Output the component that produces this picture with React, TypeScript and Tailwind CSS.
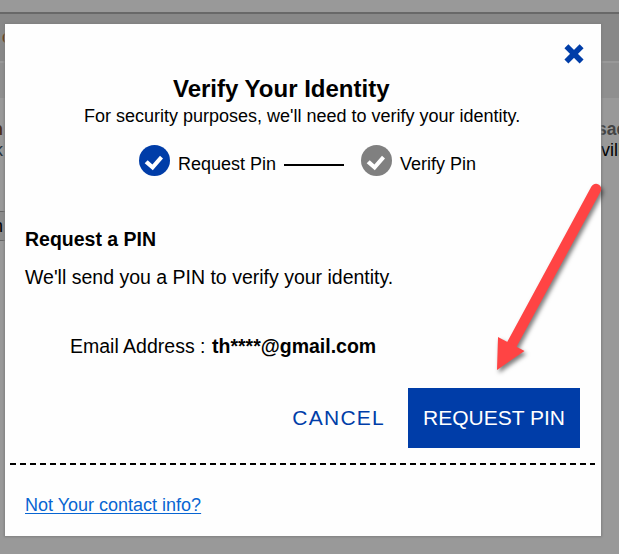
import type { ReactNode } from "react";

function StepIcon({ color }: { color: string }) {
  return (
    <svg className="block h-[31px] w-[31px] shrink-0" viewBox="0 0 31 31">
      <circle cx="15.5" cy="15.5" r="15.5" fill={color} />
      <path d="M5.7 18.3 L8.7 15.3 L13.4 19.4 L21 10.8 L24 13.6 L13.8 25.3 Z" fill="#fff" />
    </svg>
  );
}

function Line({ className, children }: { className: string; children: ReactNode }) {
  return <div className={`flex items-center whitespace-nowrap ${className}`}>{children}</div>;
}

function Backdrop() {
  return (
    <div className="flex h-full flex-col bg-[#999] text-[18px] leading-[21px]">
      <div className="h-3 shrink-0" />
      <div className="h-0.5 shrink-0 bg-[#686868]" />
      <div className="h-[47px] shrink-0 overflow-hidden bg-[#888] pt-[13px]">
        <span className="ml-[2px] text-[#5a2500]">c</span>
      </div>
      <div className="h-0.5 shrink-0 bg-[#999]" />
      <div className="h-[35px] shrink-0 bg-[#8f8f8f]" />
      <div className="flex h-[113px] shrink-0 justify-between overflow-hidden pt-[21px]">
        <div className="-ml-2">
          <div className="font-bold text-[#503018]">n</div>
          <div className="ml-[2px] text-[#26333d]">k</div>
        </div>
        <div className="w-[20px] shrink-0 whitespace-nowrap">
          <div className="-ml-[2px] text-[17.5px] font-bold text-[#444]">sac</div>
          <div className="ml-[2px] text-black">vill</div>
        </div>
      </div>
      <div className="flex h-[30px] w-8 shrink-0 items-center border-y border-[#666] bg-[#8b8b8b]">
        <span className="-ml-[7px]">n</span>
      </div>
    </div>
  );
}

export default function App() {
  return (
    <div className="relative h-[554px] w-[619px] overflow-hidden font-['Liberation_Sans',Arial,sans-serif] text-black">
      <Backdrop />
      <main className="absolute left-[5px] top-6 flex h-[512px] w-[596px] flex-col bg-[#fefefe] shadow-[0_0_2px_1px_#808080]">
        <div className="flex h-[50px] justify-end pr-[17px] pt-5">
          <button aria-label="Close" className="h-5 w-5">
            <svg className="block h-5 w-5" viewBox="0 0 20 20">
              <path d="M2.4 2.3 L17.6 17.5 M17.6 2.3 L2.4 17.5" stroke="#003da8" strokeWidth="5.6" />
            </svg>
          </button>
        </div>
        <Line className="h-[30px] pl-[168px] text-[24px] font-bold">
          <h1>Verify Your Identity</h1>
        </Line>
        <Line className="h-6 pl-[79px] text-[18px]">For security purposes, we'll need to verify your identity.</Line>
        <div className="mt-[17px] flex h-[31px] items-center pl-[134px] text-[18px]">
          <StepIcon color="#003da8" />
          <span className="ml-2 mt-2 w-[98px] whitespace-nowrap">Request Pin</span>
          <span className="ml-2 mt-[9px] h-0.5 w-[60px] bg-black" />
          <span className="w-[17px]" />
          <StepIcon color="#808080" />
          <span className="ml-2 mt-2 whitespace-nowrap">Verify Pin</span>
        </div>
        <Line className="mt-[52px] h-6 pl-5 text-[19.5px] font-bold">
          <h2>Request a PIN</h2>
        </Line>
        <Line className="mt-[14px] h-6 pl-5 text-[19.5px]">We'll send you a PIN to verify your identity.</Line>
        <Line className="mt-[45px] h-6 pl-[65px] text-[19.5px]">
          <span>Email Address :</span>
          <strong className="ml-[6.5px]">th****@gmail.com</strong>
        </Line>
        <div className="mt-[29px] flex h-[60px] justify-end pr-[21px] text-[21px]">
          <button className="mr-[23px] tracking-[1.25px] text-[#003da8]">CANCEL</button>
          <button className="w-[172px] whitespace-nowrap bg-[#003da8] text-white">REQUEST PIN</button>
        </div>
        <div className="ml-[5px] mt-[15px] h-0.5 w-[585px] bg-[repeating-linear-gradient(90deg,#000_0_6px,transparent_6px_10px)]" />
        <Line className="mt-[28px] h-6 pl-5 text-[18px]">
          <a className="text-[#0865d2] underline underline-offset-2">Not Your contact info?</a>
        </Line>
      </main>
      <svg className="pointer-events-none absolute left-[485px] top-[175px] h-[205px] w-[125px] drop-shadow-[2px_3px_2px_rgba(0,0,0,0.5)]" viewBox="485 175 125 205">
        <path d="M596 189 L511 346" stroke="#ff4444" strokeWidth="10.5" strokeLinecap="round" />
        <path d="M498 337 L524.5 351 L497 370 Z" fill="#ff4444" />
      </svg>
    </div>
  );
}
